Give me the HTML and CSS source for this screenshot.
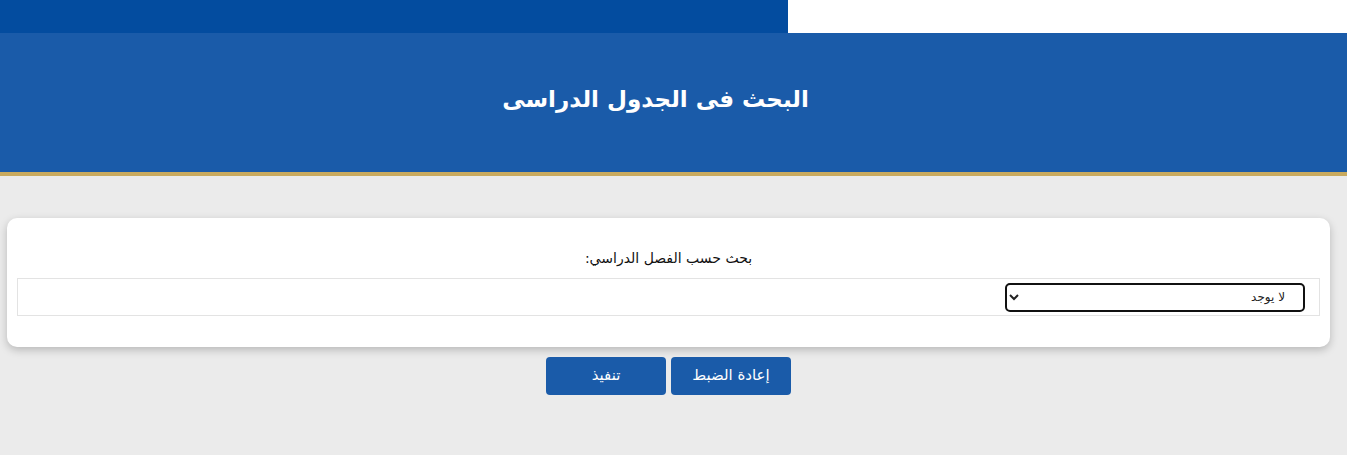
FILE: index.html
```html
<!DOCTYPE html>
<html lang="ar" dir="rtl">
<head>
    <meta charset="UTF-8">
    <meta name="viewport" content="width=device-width, initial-scale=1.0">
    <title>البحث فى الجدول الدراسى</title>
    <link rel="stylesheet" href="styles.css">
</head>
<body>
    <div class="topbar">
        <div class="topbar-light"></div>
        <div class="topbar-dark"></div>
    </div>

    <header class="page-header">
        <h1>البحث فى الجدول الدراسى</h1>
    </header>

    <main class="content">
        <div class="search-card">
            <label class="field-label" for="term">بحث حسب الفصل الدراسي:</label>
            <div class="field-row">
                <select id="term" class="term-select">
                    <option>لا يوجد</option>
                </select>
            </div>
        </div>

        <div class="actions">
            <button class="btn" type="reset">إعادة الضبط</button>
            <button class="btn" type="submit">تنفيذ</button>
        </div>
    </main>
</body>
</html>
```

FILE: styles.css
```css
body {
    margin: 0;
    background-color: #ebebeb;
    font-family: "DejaVu Sans", "Noto Sans", sans-serif;
    color: #222;
}

.topbar {
    display: flex;
    height: 33px;
}

.topbar-light {
    width: 559px;
    background-color: #fff;
}

.topbar-dark {
    flex: 1;
    background-color: #034c9f;
}

.page-header {
    background-color: #1a5ba9;
    height: 139px;
    border-bottom: 4px solid #c9aa5e;
    display: flex;
    align-items: center;
    justify-content: center;
}

.page-header h1 {
    margin: 0 36px 0 0;
    color: #fff;
    font-size: 23px;
    font-weight: bold;
    padding-bottom: 8px;
}

.content {
    padding: 42px 17px 0 7px;
}

.search-card {
    background-color: #fff;
    border-radius: 10px;
    box-shadow: 0 3px 8px rgba(0, 0, 0, 0.22);
    padding: 30px 10px 31px;
    display: flex;
    flex-direction: column;
}

.field-label {
    text-align: center;
    font-size: 14px;
    line-height: 20px;
    margin-bottom: 10px;
    color: #111;
}

.field-row {
    border: 1px solid #e3e3e3;
    height: 36px;
    display: flex;
    align-items: center;
    padding-right: 14px;
}

.term-select {
    width: 300px;
    height: 29px;
    border: 2px solid #111;
    border-radius: 5px;
    background-color: #fff;
    font-family: "DejaVu Sans", sans-serif;
    font-size: 12px;
    color: #222;
    padding: 0 14px;
}

.actions {
    display: flex;
    justify-content: center;
    gap: 5px;
    margin-top: 10px;
}

.btn {
    width: 120px;
    height: 38px;
    border: none;
    border-radius: 4px;
    background-color: #1a5ba9;
    color: #fff;
    font-family: "DejaVu Sans", sans-serif;
    font-size: 15px;
    cursor: pointer;
    padding-bottom: 4px;
}

.btn:hover {
    background-color: #154c8f;
}
```
